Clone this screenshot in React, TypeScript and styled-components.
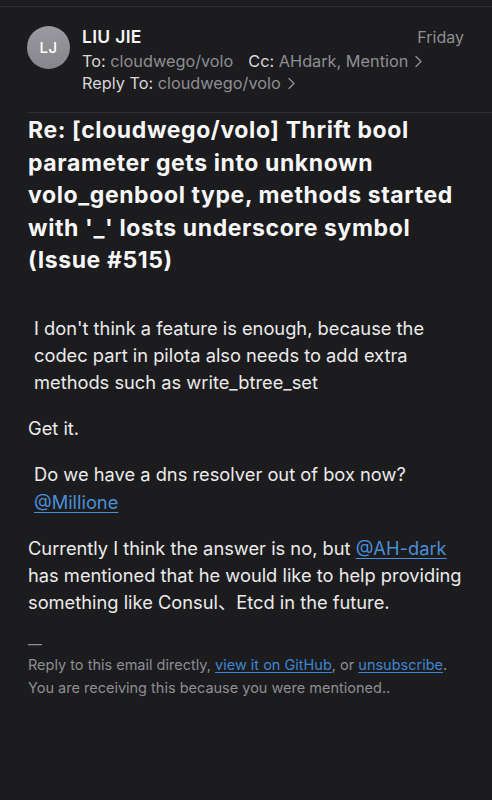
import React from "react";
import styled, { createGlobalStyle } from "styled-components";

const Global = createGlobalStyle`
  html, body { margin: 0; padding: 0; background: #1c1c1e; }
  body { font-family: Inter, "Noto Sans", "Noto Sans CJK SC", sans-serif; -webkit-font-smoothing: antialiased; }
`;

const Page = styled.div`
  width: 492px;
  min-height: 800px;
  background: #1c1c1e;
  color: #f2f2f2;
  box-sizing: border-box;
  padding-top: 6px;
`;

const TopRule = styled.div`
  height: 1px;
  background: #2e2e30;
`;

const Header = styled.div`
  display: flex;
  align-items: flex-start;
  padding: 19px 28px 0 27px;
  gap: 12px;
`;

const Avatar = styled.div`
  width: 43px;
  height: 43px;
  border-radius: 50%;
  background: linear-gradient(180deg, #9a9aa0 0%, #85858b 100%);
  color: #fff;
  font-size: 15px;
  font-weight: 500;
  display: flex;
  align-items: center;
  justify-content: center;
  flex-shrink: 0;
  letter-spacing: 0.5px;
`;

const Meta = styled.div`
  flex: 1;
  display: flex;
  flex-direction: column;
`;

const NameRow = styled.div`
  display: flex;
  justify-content: space-between;
  align-items: baseline;
  height: 24px;
`;

const Name = styled.span`
  font-size: 17.5px;
  font-weight: 600;
  color: #f5f5f5;
  letter-spacing: 0.3px;
`;

const Day = styled.span`
  font-size: 16px;
  color: #8e8e93;
`;

const MetaLine = styled.div`
  font-size: 16.3px;
  line-height: 22px;
  color: #d8d8d8;
  white-space: nowrap;
`;

const Muted = styled.span`
  color: #8e8e93;
`;

const Gap = styled.span`
  display: inline-block;
  width: 15px;
`;

const Divider = styled.div`
  height: 1px;
  background: #2e2e30;
  margin: 18px 0 0 27px;
`;

const Body = styled.div`
  padding: 1px 20px 0 28px;
`;

const Title = styled.h1`
  margin: 0;
  font-size: 23px;
  line-height: 32.5px;
  font-weight: 700;
  color: #f7f7f7;
  letter-spacing: 0.6px;
`;

const Para = styled.p<{ $indent?: boolean }>`
  margin: 0;
  font-size: 18.3px;
  line-height: 27.2px;
  color: #ebebeb;
  padding-left: ${(p) => (p.$indent ? "6px" : "0")};
`;

const Block = styled.div<{ $top: number }>`
  display: flex;
  flex-direction: column;
  margin-top: ${(p) => p.$top}px;
`;

const Link = styled.a`
  color: #4a8fd8;
  text-decoration: underline;
  text-underline-offset: 3px;
`;

const Dash = styled.div`
  font-size: 14px;
  color: #8e8e93;
  line-height: 16px;
`;

const Footer = styled.p`
  margin: 1px 0 0 0;
  font-size: 14.5px;
  line-height: 23px;
  color: #8e8e93;
`;

const FootLink = styled.a`
  color: #3d86d4;
  text-decoration: underline;
  text-underline-offset: 2px;
`;

const Chevron = () => (
  <svg width="9" height="13" viewBox="0 0 9 13" style={{ marginLeft: 6, verticalAlign: "-1px" }}>
    <path d="M2 1.5 L7 6.5 L2 11.5" fill="none" stroke="#8e8e93" strokeWidth="1.4" strokeLinecap="round" strokeLinejoin="round" />
  </svg>
);

export default function App() {
  return (
    <Page>
      <Global />
      <TopRule />
      <Header>
        <Avatar>LJ</Avatar>
        <Meta>
          <NameRow>
            <Name>LIU JIE</Name>
            <Day>Friday</Day>
          </NameRow>
          <MetaLine>
            To: <Muted>cloudwego/volo</Muted>
            <Gap />
            Cc: <Muted>AHdark, Mention</Muted>
            <Chevron />
          </MetaLine>
          <MetaLine>
            Reply To: <Muted>cloudwego/volo</Muted>
            <Chevron />
          </MetaLine>
        </Meta>
      </Header>
      <Divider />
      <Body>
        <Title>
          Re: [cloudwego/volo] Thrift bool parameter gets into unknown volo_genbool type, methods started with '_' losts underscore symbol (Issue #515)
        </Title>
        <Block $top={38}>
          <Para $indent>
            I don't think a feature is enough, because the codec part in pilota also needs to add extra methods such as write_btree_set
          </Para>
        </Block>
        <Block $top={19}>
          <Para>Get it.</Para>
        </Block>
        <Block $top={19}>
          <Para $indent>
            Do we have a dns resolver out of box now?
            <br />
            <Link>@Millione</Link>
          </Para>
        </Block>
        <Block $top={19}>
          <Para>
            Currently I think the answer is no, but <Link>@AH-dark</Link> has mentioned that he would like to help providing something like Consul、Etcd in the future.
          </Para>
        </Block>
        <Block $top={20}>
          <Dash>—</Dash>
          <Footer>
            Reply to this email directly, <FootLink>view it on GitHub</FootLink>, or <FootLink>unsubscribe</FootLink>.
            <br />
            You are receiving this because you were mentioned..
          </Footer>
        </Block>
      </Body>
    </Page>
  );
}
